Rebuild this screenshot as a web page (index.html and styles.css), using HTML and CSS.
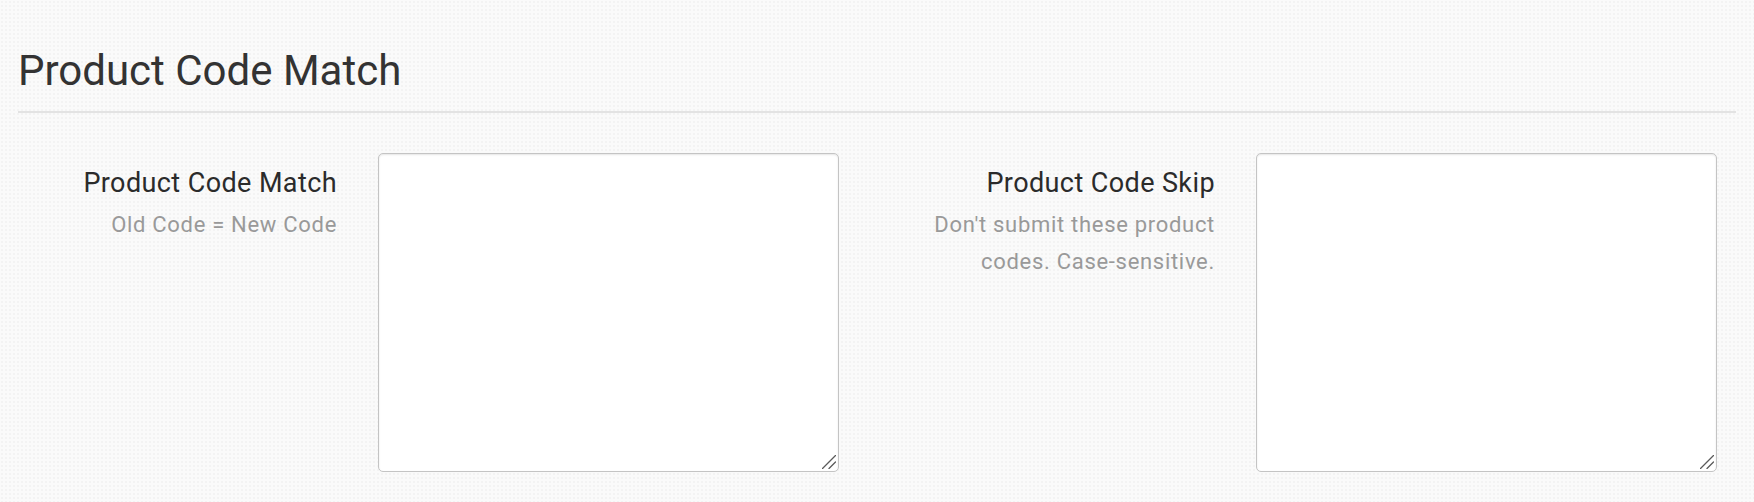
FILE: index.html
```html
<!DOCTYPE html>
<html lang="en">
<head>
<meta charset="utf-8">
<title>Product Code Match</title>
<link rel="stylesheet" href="styles.css">
</head>
<body>
<div class="page">
  <h2 class="section-title">Product Code Match</h2>
  <div class="form-grid">
    <div class="field">
      <div class="field-label">
        <label class="label-main" for="match">Product Code Match</label>
        <p class="label-help">Old Code = New Code</p>
      </div>
      <div class="input-wrap">
        <textarea id="match" class="field-input"></textarea>
        <svg class="grip" width="14" height="14" viewBox="0 0 14 14" aria-hidden="true"><path d="M0.5 13.5 L13.5 0.5 M7 13.5 L13.5 7" stroke="#5a5a5a" stroke-width="1.3" stroke-linecap="round" fill="none"/></svg>
      </div>
    </div>
    <div class="field">
      <div class="field-label">
        <label class="label-main" for="skip">Product Code Skip</label>
        <p class="label-help">Don't submit these product codes. Case-sensitive.</p>
      </div>
      <div class="input-wrap">
        <textarea id="skip" class="field-input"></textarea>
        <svg class="grip" width="14" height="14" viewBox="0 0 14 14" aria-hidden="true"><path d="M0.5 13.5 L13.5 0.5 M7 13.5 L13.5 7" stroke="#5a5a5a" stroke-width="1.3" stroke-linecap="round" fill="none"/></svg>
      </div>
    </div>
  </div>
</div>
</body>
</html>
```
FILE: styles.css
```css
html, body {
  margin: 0;
  padding: 0;
}
body {
  background-color: #fafafa;
  background-image: radial-gradient(circle, #f3f3f3 0.8px, transparent 1.2px);
  background-size: 4px 4px;
  font-family: Roboto, "Liberation Sans", Arial, sans-serif;
  color: #333;
  height: 502px;
  overflow: hidden;
}
.page {
  padding: 0 18px;
}
.section-title {
  margin: 0;
  padding-top: 47px;
  padding-bottom: 16px;
  font-size: 42px;
  font-weight: 400;
  line-height: 48px;
  color: #333;
  border-bottom: 2px solid #e3e3e3;
}
.form-grid {
  display: grid;
  grid-template-columns: 1fr 1fr;
  column-gap: 38px;
  padding-top: 40px;
}
.field {
  display: grid;
  grid-template-columns: 319px 461px;
  column-gap: 41px;
}
.field-label {
  text-align: right;
  padding-top: 12px;
}
.label-main {
  display: block;
  font-size: 27px;
  line-height: 36px;
  letter-spacing: 0.4px;
  color: #2b2b2b;
}
.label-help {
  margin: 5px 0 0;
  font-size: 22px;
  line-height: 37px;
  letter-spacing: 0.7px;
  color: #999;
}
.input-wrap {
  position: relative;
  width: 461px;
  height: 319px;
}
.field-input {
  display: block;
  box-sizing: border-box;
  width: 461px;
  height: 319px;
  margin: 0;
  border: 1px solid #c4c4c4;
  border-radius: 5px;
  background: #fff;
  box-shadow: inset 0 1px 2px rgba(0,0,0,0.1);
  font-family: inherit;
  font-size: 18px;
  padding: 8px 12px;
  resize: none;
}
.grip {
  position: absolute;
  right: 3px;
  bottom: 3px;
  pointer-events: none;
}
```
